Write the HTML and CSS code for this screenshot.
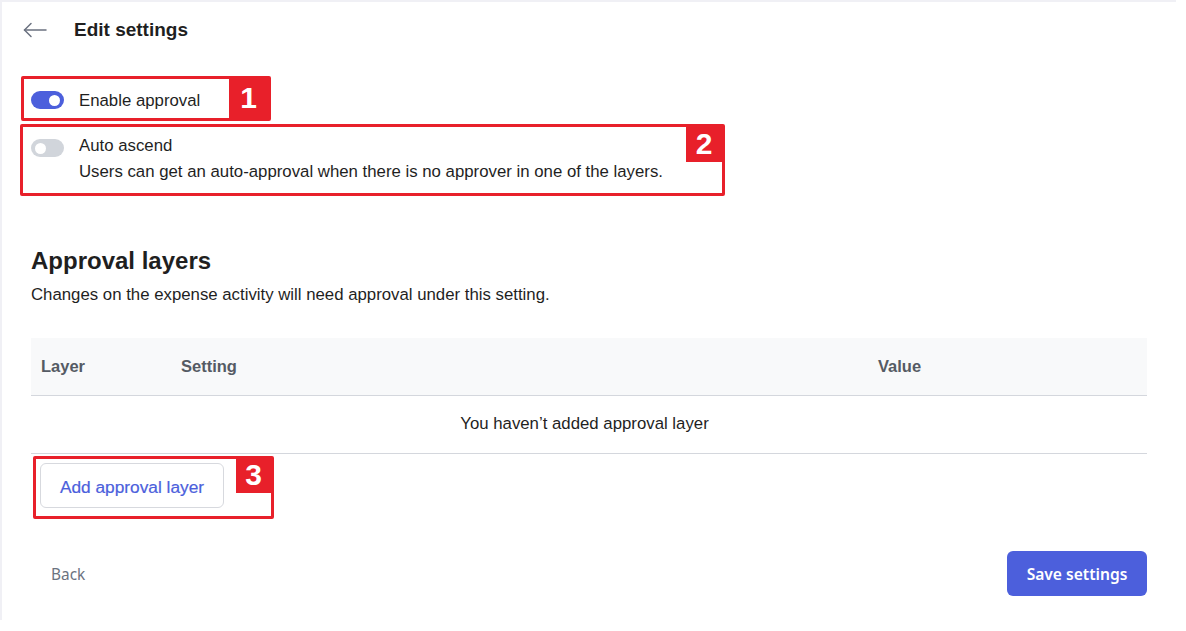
FILE: index.html
```html
<!DOCTYPE html>
<html lang="en">

<head>
    <meta charset="UTF-8">
    <meta name="viewport" content="width=device-width, initial-scale=1.0">
    <title>Edit settings</title>
    <link rel="stylesheet" href="styles.css">
</head>

<body>
    <div class="panel">
        <header class="top">
            <a class="back-arrow" href="#">
                <svg width="24" height="16" viewBox="0 0 24 16" fill="none" stroke="#6b7280" stroke-width="1.5"
                    stroke-linecap="round" stroke-linejoin="round">
                    <path d="M23 8H1.5" />
                    <path d="M8 1.5L1.5 8L8 14.5" />
                </svg>
            </a>
            <h1>Edit settings</h1>
        </header>

        <div class="mark mark-1">
            <span class="toggle on"></span>
            <span class="label">Enable approval</span>
            <span class="badge">1</span>
        </div>

        <div class="mark mark-2">
            <span class="toggle"></span>
            <div class="text">
                <p class="label">Auto ascend</p>
                <p class="hint">Users can get an auto-approval when there is no approver in one of the layers.</p>
            </div>
            <span class="badge">2</span>
        </div>

        <section class="layers">
            <h2>Approval layers</h2>
            <p class="sub">Changes on the expense activity will need approval under this setting.</p>

            <table class="grid">
                <thead>
                    <tr>
                        <th class="c-layer">Layer</th>
                        <th class="c-setting">Setting</th>
                        <th class="c-value">Value</th>
                    </tr>
                </thead>
                <tbody>
                    <tr>
                        <td colspan="3" class="empty">You haven’t added approval layer</td>
                    </tr>
                </tbody>
            </table>

            <div class="mark mark-3">
                <button class="btn-outline">Add approval layer</button>
                <span class="badge">3</span>
            </div>
        </section>

        <footer class="actions">
            <button class="btn-link">Back</button>
            <button class="btn-primary">Save settings</button>
        </footer>
    </div>
</body>

</html>
```

FILE: styles.css
```css
* {
    box-sizing: border-box;
}

body {
    margin: 0;
    background: #fff;
    font-family: "Liberation Sans", Arial, sans-serif;
    color: #1f1f1f;
}

p {
    margin: 0;
}

.panel {
    width: 1176px;
    height: 620px;
    border-top: 2px solid #f0f0f5;
    border-left: 2px solid #f0f0f5;
    padding: 0 29px;
}

.top {
    display: flex;
    align-items: center;
    height: 56px;
    margin-left: -8px;
}

.back-arrow {
    display: flex;
    width: 51px;
}

.top h1 {
    margin: 0;
    font-size: 19px;
    font-weight: bold;
    color: #1f1f1f;
}

/* red annotation frames */
.mark {
    position: relative;
    border: 3px solid #e8202a;
    border-radius: 2px;
}

.badge {
    position: absolute;
    top: -1px;
    right: 0;
    display: flex;
    align-items: center;
    justify-content: center;
    background: #e8202a;
    color: #fff;
    font-weight: bold;
    font-size: 30px;
}

.mark-1 {
    display: flex;
    align-items: center;
    width: 250px;
    height: 45px;
    margin-top: 18px;
    margin-left: -10px;
    padding: 4px 0 0 7px;
}

.mark-1 .toggle {
    margin-top: -1px;
}

.mark-1 .badge {
    width: 39px;
    height: 40px;
}

.mark-2 {
    display: flex;
    align-items: flex-start;
    width: 705px;
    height: 72px;
    margin-top: 3px;
    margin-left: -11px;
    padding: 8px 0 0 8px;
}

.mark-2 .toggle {
    margin-top: 4px;
}

.mark-2 .badge {
    width: 36px;
    height: 36px;
}

.mark-3 {
    width: 241px;
    height: 63px;
    margin-top: 2px;
    margin-left: 2px;
    padding: 4px 0 0 4px;
}

.mark-3 .badge {
    width: 35px;
    height: 35px;
}

.toggle {
    position: relative;
    flex: none;
    width: 33px;
    height: 18px;
    border-radius: 9px;
    background: #d1d5db;
    margin-right: 15px;
}

.toggle::after {
    content: "";
    position: absolute;
    top: 3.5px;
    left: 4px;
    width: 11px;
    height: 11px;
    border-radius: 50%;
    background: #fff;
}

.toggle.on {
    background: #4c5fdc;
}

.toggle.on::after {
    left: 18px;
}

.label {
    font-size: 16.8px;
    line-height: 22px;
}

.hint {
    margin-top: 4px;
    font-size: 16.8px;
    line-height: 22px;
}

.layers h2 {
    margin: 50px 0 0;
    font-size: 24px;
    line-height: 30px;
    font-weight: bold;
}

.layers .sub {
    margin-top: 8px;
    font-size: 16.8px;
    line-height: 22px;
}

.grid {
    width: 100%;
    margin-top: 32px;
    border-collapse: collapse;
}

.grid th {
    height: 57px;
    padding: 0 10px;
    background: #f8f9fa;
    border-bottom: 1px solid #d4d7dd;
    text-align: left;
    font-size: 16.5px;
    font-weight: bold;
    color: #555b64;
}

.c-layer {
    width: 140px;
}

.c-setting {
    width: 697px;
}

.grid td {
    height: 58px;
    border-bottom: 1px solid #d4d7dd;
    font-size: 16.8px;
}

.grid .empty {
    text-align: center;
    padding-right: 10px;
}

.btn-outline {
    width: 184px;
    height: 45px;
    border: 1px solid #d7d9de;
    border-radius: 6px;
    background: #fff;
    font-family: "Liberation Sans", Arial, sans-serif;
    font-size: 17.3px;
    color: #4c5fdc;
    padding-top: 5px;
    -webkit-text-stroke: 0.2px #4c5fdc;
}

.actions {
    display: flex;
    justify-content: space-between;
    align-items: center;
    margin-top: 32px;
}

.btn-link {
    height: 45px;
    padding: 3px 20px 0;
    border: 0;
    background: none;
    font-family: "Noto Sans", sans-serif;
    font-size: 15.4px;
    color: #6b7280;
}

.btn-primary {
    width: 140px;
    height: 45px;
    border: 0;
    border-radius: 6px;
    background: #4c5fdc;
    font-family: "Noto Sans", sans-serif;
    font-size: 15.6px;
    font-weight: 600;
    color: #fff;
    padding-top: 2px;
}
```
